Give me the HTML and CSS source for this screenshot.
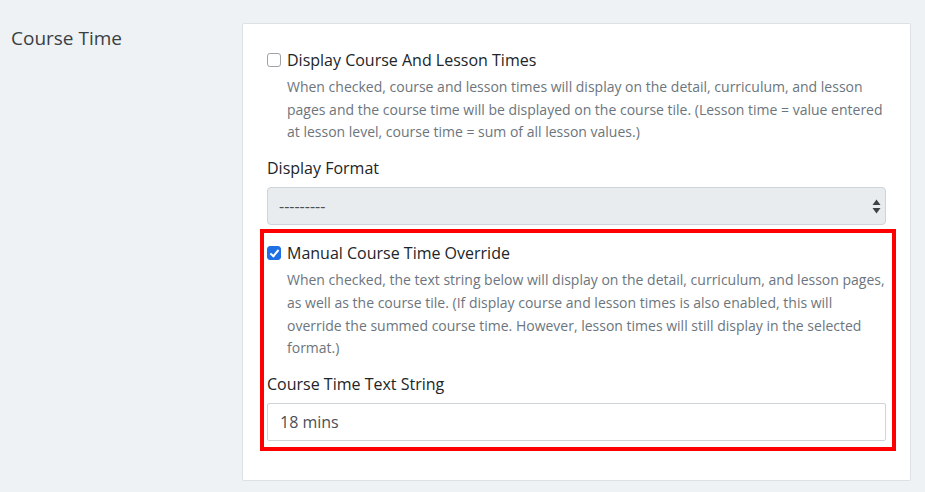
FILE: index.html
```html
<!DOCTYPE html>
<html>
<head>
<meta charset="utf-8">
<link rel="stylesheet" href="styles.css">
</head>
<body>
<div class="row">
  <div class="side-label">Course Time</div>
  <div class="card">
    <div class="check-group">
      <label class="check-row">
        <input type="checkbox" class="cb">
        <span class="check-label">Display Course And Lesson Times</span>
      </label>
      <p class="help">When checked, course and lesson times will display on the detail, curriculum, and lesson pages and the course time will be displayed on the course tile. (Lesson time = value entered at lesson level, course time = sum of all lesson values.)</p>
    </div>
    <div class="field">
      <div class="field-label">Display Format</div>
      <div class="select">
        <span>---------</span>
        <svg class="arrows" width="9" height="15" viewBox="0 0 9 15"><path d="M4.5 0.5 L8.5 6 L0.5 6 Z" fill="#3d4246"/><path d="M0.5 9 L8.5 9 L4.5 14.5 Z" fill="#3d4246"/></svg>
      </div>
    </div>
    <div class="highlight">
      <div class="check-group">
        <label class="check-row">
          <input type="checkbox" class="cb" checked>
          <span class="check-label">Manual Course Time Override</span>
        </label>
        <p class="help">When checked, the text string below will display on the detail, curriculum, and lesson pages, as well as the course tile. (If display course and lesson times is also enabled, this will override the summed course time. However, lesson times will still display in the selected format.)</p>
      </div>
      <div class="field">
        <div class="field-label">Course Time Text String</div>
        <div class="text-input">18 mins</div>
      </div>
    </div>
  </div>
</div>
</body>
</html>
```

FILE: styles.css
```css
* { box-sizing: border-box; }
html, body { margin: 0; padding: 0; }
body {
  background: #eef2f5;
  font-family: "Open Sans", "Liberation Sans", sans-serif;
  color: #212529;
  width: 925px;
  height: 492px;
  overflow: hidden;
}
.row {
  display: flex;
  padding-top: 23px;
}
.side-label {
  width: 242px;
  padding-left: 11px;
  padding-top: 2px;
  font-size: 19px;
  line-height: 26px;
  color: #3a3f44;
}
.card {
  width: 669px;
  background: #fff;
  border: 1px solid #dde1e5;
  border-radius: 2px;
  padding: 24px 24px 39px 24px;
}
.check-row {
  display: flex;
  align-items: center;
  gap: 6px;
}
.cb {
  appearance: none;
  -webkit-appearance: none;
  margin: 0;
  width: 14px;
  height: 14px;
  border: 1px solid #9ea3a8;
  border-radius: 3px;
  background: #fff;
  flex: none;
  position: relative;
}
.cb:checked {
  background: #1f6fe5;
  border-color: #1f6fe5;
}
.cb:checked::after {
  content: "";
  position: absolute;
  left: 4px;
  top: 1px;
  width: 3px;
  height: 7px;
  border: solid #fff;
  border-width: 0 2px 2px 0;
  transform: rotate(40deg);
}
.check-label {
  font-size: 16px;
  line-height: 24px;
  color: #212529;
}
.help {
  margin: 4px 0 0 20px;
  font-size: 14px;
  line-height: 22.7px;
  color: #6c757d;
}
.field {
  margin-top: 12px;
}
.field-label {
  font-size: 16px;
  line-height: 24px;
  margin-bottom: 7px;
}
.select {
  height: 38px;
  background: #e9ecef;
  border: 1px solid #ced4da;
  border-radius: 4px;
  display: flex;
  align-items: center;
  justify-content: space-between;
  padding: 0 4px 0 11px;
  font-size: 16px;
  color: #495057;
}
.highlight {
  position: relative;
  margin-top: 16px;
}
.highlight::after {
  content: "";
  position: absolute;
  top: -12px;
  left: -7px;
  right: -10px;
  bottom: -10px;
  border: 4px solid #ff0000;
  pointer-events: none;
}
.text-input {
  height: 38px;
  border: 1px solid #ced4da;
  border-radius: 2px;
  display: flex;
  align-items: center;
  padding: 0 12px;
  font-size: 16px;
  color: #495057;
}
```
